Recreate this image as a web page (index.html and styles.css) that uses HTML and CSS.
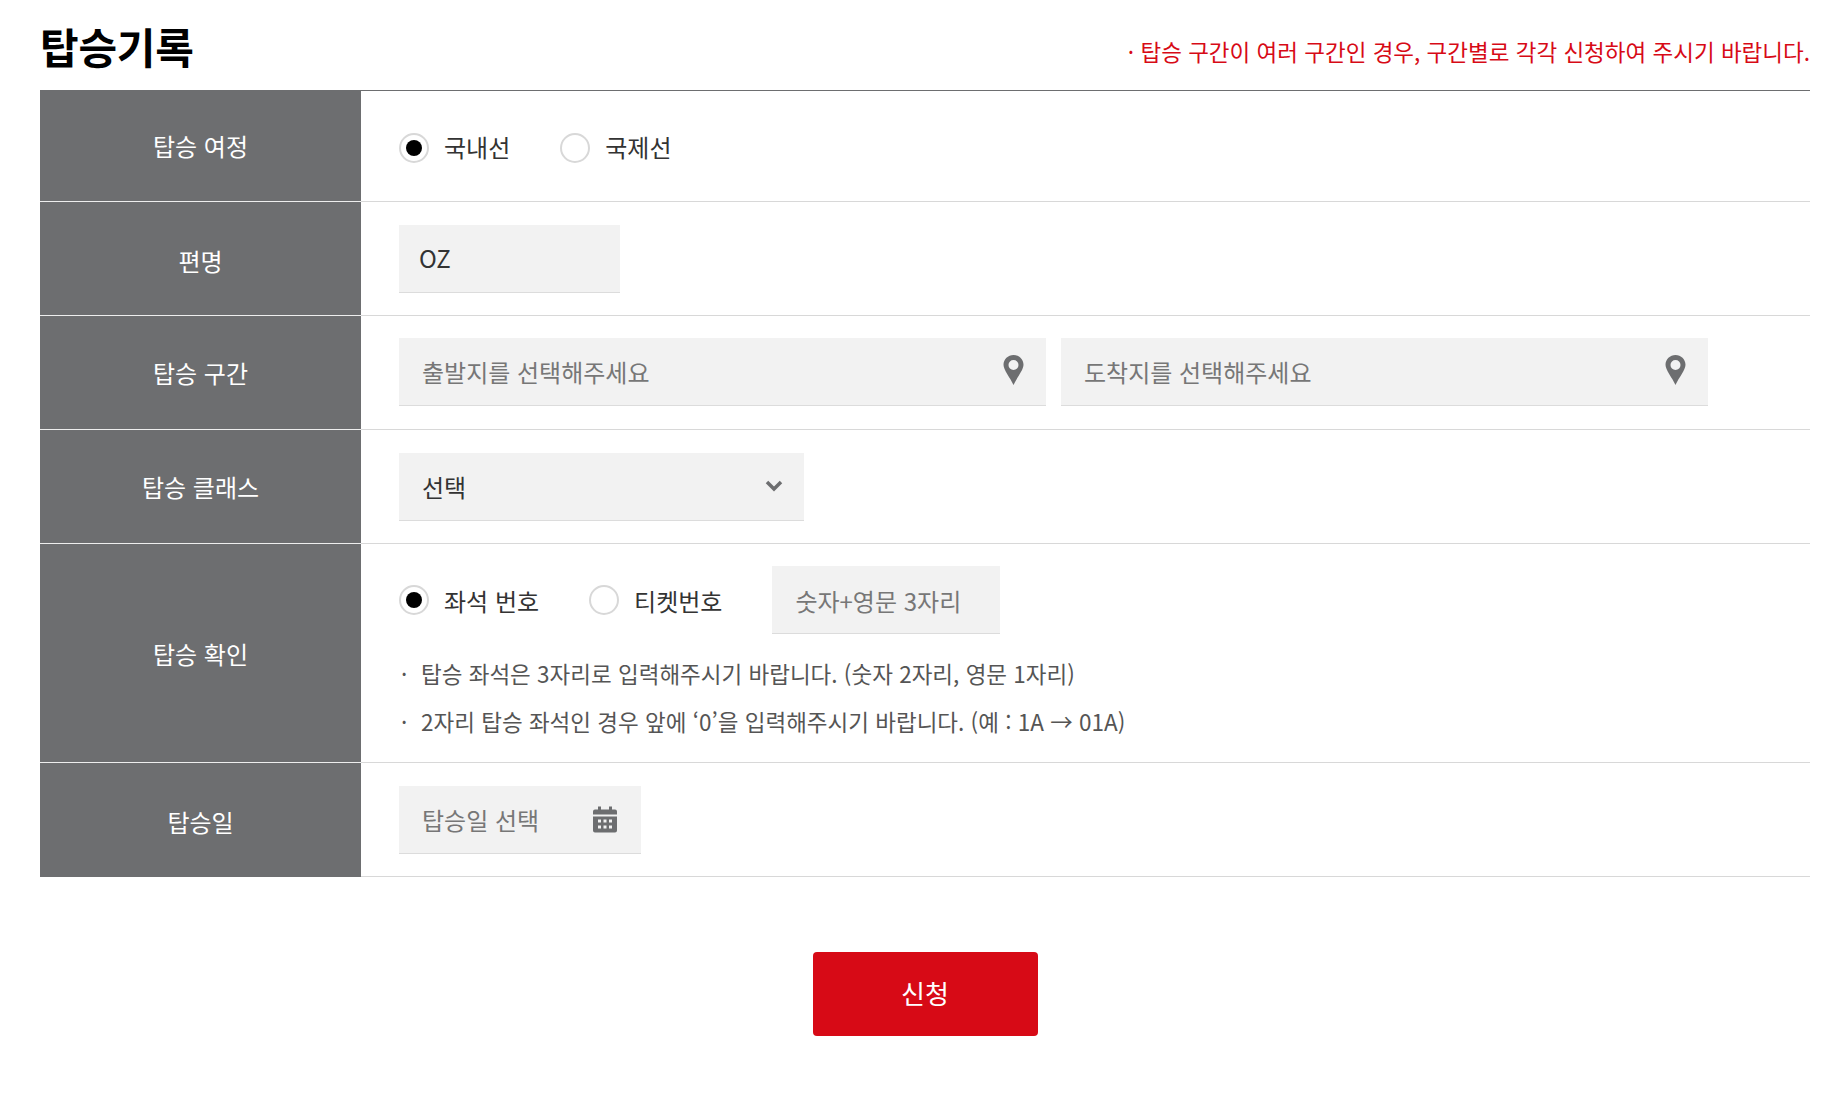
FILE: index.html
```html
<!DOCTYPE html>
<html lang="ko">
  <head>
    <meta charset="UTF-8" />
    <title>탑승기록</title>
    <link rel="stylesheet" href="styles.css">
  </head>
  <body>
    <div class="container">
      <div class="head">
        <h2>탑승기록</h2>
        <p class="notice">· 탑승 구간이 여러 구간인 경우, 구간별로 각각 신청하여 주시기 바랍니다.</p>
      </div>
      <div class="form">
        <div class="row row-first">
          <div class="label">탑승 여정</div>
          <div class="field">
            <span class="radio checked"></span><span class="radio-text gap-a">국내선</span>
            <span class="radio"></span><span class="radio-text">국제선</span>
          </div>
        </div>
        <div class="row">
          <div class="label label-low">편명</div>
          <div class="field">
            <div class="box box-flight"><span class="value value-flight">OZ</span></div>
          </div>
        </div>
        <div class="row">
          <div class="label">탑승 구간</div>
          <div class="field field-route">
            <div class="box box-route">
              <span class="hint">출발지를 선택해주세요</span>
              <svg class="pin" viewBox="0 0 20 30"><path fill-rule="evenodd" d="M10 0C4.500 0 0 4.400 0 9.800 0 15 6.500 22.500 10 30c3.500-7.500 10-15 10-20.200C20 4.400 15.500 0 10 0zm0 5a5 5 0 1 1 0 10 5 5 0 0 1 0-10z"/></svg>
            </div>
            <div class="box box-route">
              <span class="hint">도착지를 선택해주세요</span>
              <svg class="pin" viewBox="0 0 20 30"><path fill-rule="evenodd" d="M10 0C4.500 0 0 4.400 0 9.800 0 15 6.500 22.500 10 30c3.500-7.500 10-15 10-20.200C20 4.400 15.500 0 10 0zm0 5a5 5 0 1 1 0 10 5 5 0 0 1 0-10z"/></svg>
            </div>
          </div>
        </div>
        <div class="row">
          <div class="label">탑승 클래스</div>
          <div class="field">
            <div class="box box-select">
              <span class="value">선택</span>
              <svg class="chevron" viewBox="0 0 18 12"><path d="M2 2l7 7 7-7" fill="none" stroke="#6d6e70" stroke-width="3.500"/></svg>
            </div>
          </div>
        </div>
        <div class="row row-check">
          <div class="label">탑승 확인</div>
          <div class="field-stack">
            <div class="check-line">
              <span class="radio checked"></span><span class="radio-text gap-b">좌석 번호</span>
              <span class="radio"></span><span class="radio-text gap-c">티켓번호</span>
              <div class="box box-seat"><span class="hint hint-low">숫자+영문 3자리</span></div>
            </div>
            <ul class="notes">
              <li>탑승 좌석은 3자리로 입력해주시기 바랍니다. (숫자 2자리, 영문 1자리)</li>
              <li>2자리 탑승 좌석인 경우 앞에 ‘0’을 입력해주시기 바랍니다. (예 : 1A → 01A)</li>
            </ul>
          </div>
        </div>
        <div class="row">
          <div class="label label-low">탑승일</div>
          <div class="field">
            <div class="box box-date">
              <span class="hint">탑승일 선택</span>
              <svg class="calendar" viewBox="0 0 24 26">
                <path fill="#6d6e70" d="M5 0h3v3h8V0h3v3h3a2 2 0 0 1 2 2v3H0V5a2 2 0 0 1 2-2h3zM0 10h24v14a2 2 0 0 1-2 2H2a2 2 0 0 1-2-2z"/>
                <path fill="#f2f2f2" d="M5 13h3v3H5zM10.500 13h3v3h-3zM16 13h3v3h-3zM5 19h3v3H5zM10.500 19h3v3h-3zM16 19h3v3h-3z"/>
              </svg>
            </div>
          </div>
        </div>
      </div>
      <div class="actions">
        <button class="submit">신청</button>
      </div>
    </div>
  </body>
</html>
```

FILE: styles.css
```css
* {
  margin: 0;
  padding: 0;
  box-sizing: border-box;
}
body {
  font-family: "Noto Sans CJK KR", "Noto Sans", sans-serif;
  background: #fff;
  color: #222;
}
.container {
  margin-left: 40px;
  width: 1770px;
}
.head {
  display: flex;
  justify-content: space-between;
  align-items: flex-end;
  height: 90px;
}
.head h2 {
  font-size: 42px;
  line-height: 60px;
  font-weight: 700;
  letter-spacing: -0.25px;
  color: #000;
  margin-bottom: 14px;
}
.notice {
  font-size: 22.5px;
  line-height: 32px;
  color: #d70a16;
  margin-bottom: 23px;
}
.form {
  border-top: 1px solid #6d6e70;
}
.row {
  display: flex;
  height: 114px;
  border-bottom: 1px solid #d8d8d8;
}
.row-first {
  height: 111px;
}
.row-check {
  height: 219px;
}
.label {
  flex: 0 0 321px;
  display: flex;
  align-items: center;
  justify-content: center;
  background: #6d6e70;
  color: #fff;
  font-size: 24px;
  margin-bottom: -1px;
  border-bottom: 1px solid #eeeeee;
}
.row-first .label {
  padding-bottom: 2px;
}
.label-low {
  padding-top: 3px;
}
.row:last-child .label {
  border-bottom: 0;
}
.field {
  display: flex;
  align-items: center;
  padding-left: 38px;
  flex: 1;
}
.field-route {
  gap: 15px;
}
.field-stack {
  flex: 1;
  padding: 22px 0 0 38px;
}
.check-line {
  display: flex;
  align-items: center;
}
.radio {
  flex: none;
  width: 30px;
  height: 30px;
  border-radius: 50%;
  border: 2px solid #d8d8d8;
  background: #fff;
  display: flex;
  align-items: center;
  justify-content: center;
}
.row-first .radio {
  margin-top: 4px;
}
.radio.checked::after {
  content: "";
  width: 16px;
  height: 16px;
  border-radius: 50%;
  background: #000;
}
.radio-text {
  margin-left: 15px;
  font-size: 24px;
  color: #333;
}
.gap-a {
  margin-right: 50px;
}
.gap-b {
  margin-right: 50px;
}
.gap-c {
  margin-right: 50px;
}
.box {
  display: flex;
  align-items: center;
  justify-content: space-between;
  height: 68px;
  padding: 0 23px;
  background: #f2f2f2;
  border-bottom: 1px solid #dcdcdc;
  font-size: 24px;
}
.box-flight {
  width: 221px;
}
.box-route {
  width: 647px;
  padding-right: 22px;
  margin-bottom: 2px;
}
.box-select {
  width: 405px;
  padding-right: 21px;
}
.box-seat {
  width: 228px;
}
.box-date {
  width: 242px;
  padding-right: 24px;
}
.value {
  color: #333;
}
.value-flight {
  margin-left: -3px;
  padding-bottom: 2px;
}
.hint {
  color: #777;
}
.hint-low {
  padding-top: 2px;
}
.pin {
  width: 21px;
  height: 30px;
  fill: #6d6e70;
  margin-bottom: 3px;
}
.chevron {
  width: 18px;
  height: 12px;
}
.calendar {
  width: 24px;
  height: 27px;
}
.notes {
  list-style: none;
  margin-top: 15px;
}
.notes li {
  position: relative;
  padding-left: 22px;
  font-size: 22.5px;
  line-height: 48px;
  color: #555;
}
.notes li::before {
  content: "·";
  position: absolute;
  left: 2px;
}
.actions {
  display: flex;
  justify-content: center;
  margin-top: 75px;
}
.submit {
  width: 225px;
  height: 84px;
  border: 0;
  border-radius: 4px;
  background: #d70a16;
  color: #fff;
  font: inherit;
  font-size: 26px;
  padding-bottom: 4px;
}
```
